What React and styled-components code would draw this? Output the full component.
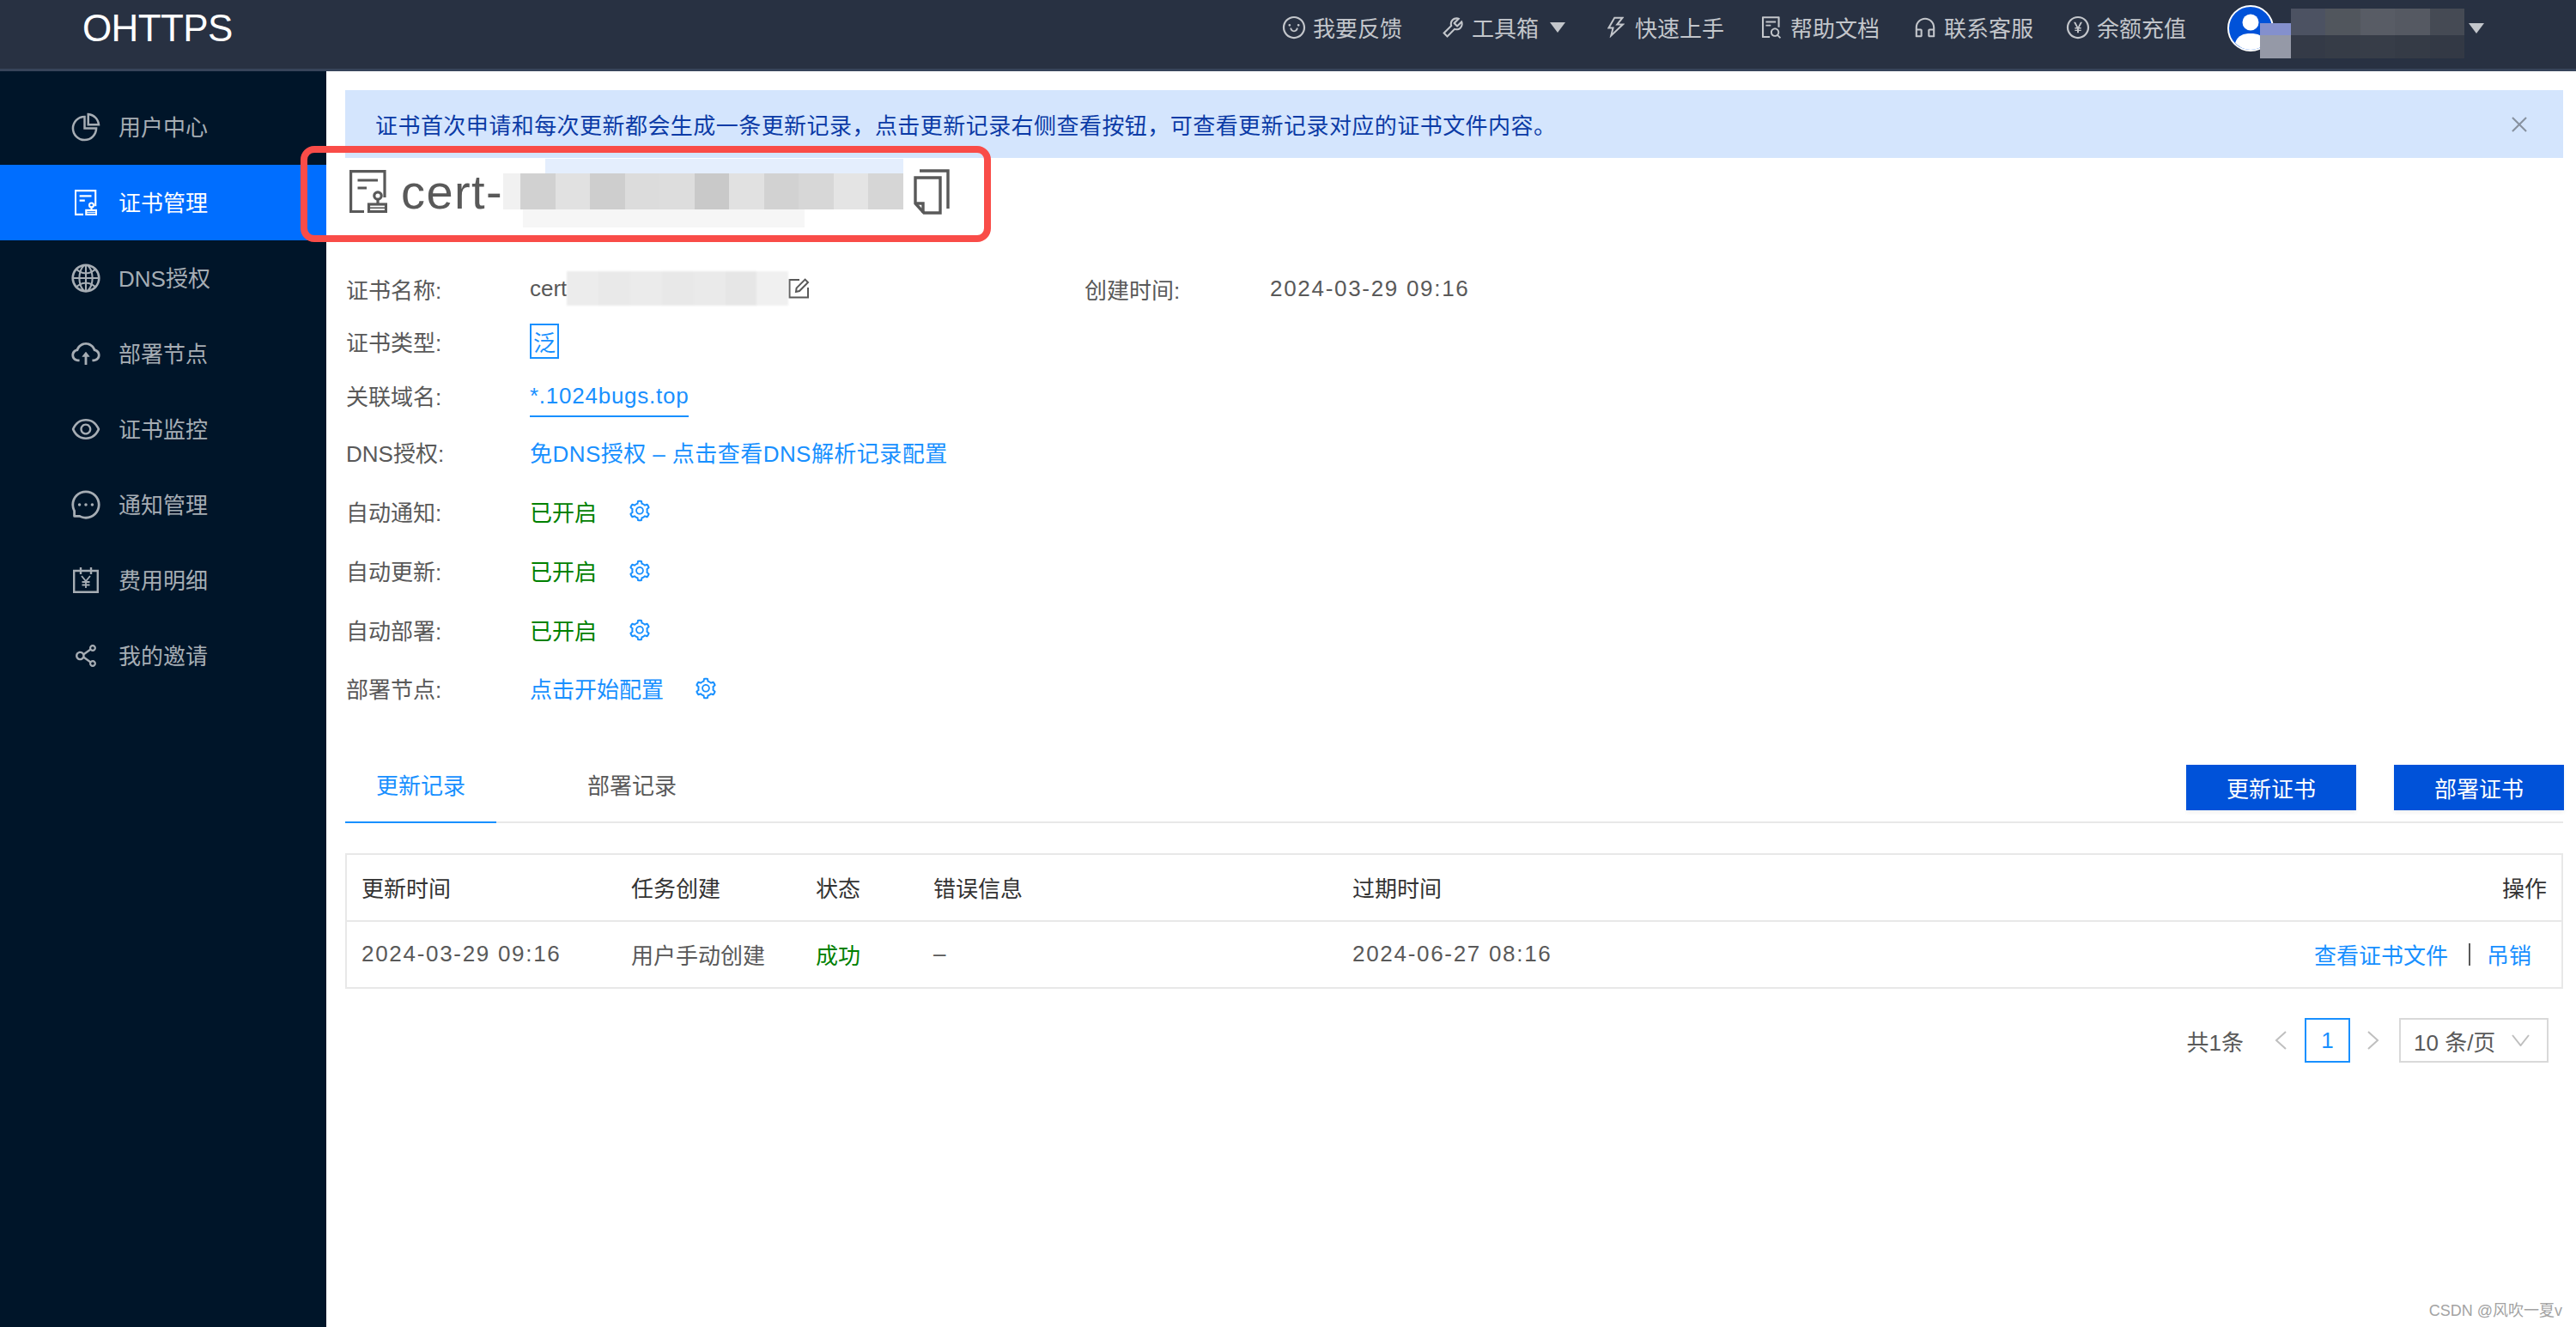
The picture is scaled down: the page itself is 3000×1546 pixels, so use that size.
import React from "react";
import styled, { createGlobalStyle } from "styled-components";
import {
  AiOutlineSmile,
  AiOutlineTool,
  AiOutlineThunderbolt,
  AiOutlineFileSearch,
  AiOutlineCustomerService,
  AiOutlinePayCircle,
  AiOutlinePieChart,
  AiOutlineGlobal,
  AiOutlineCloudUpload,
  AiOutlineEye,
  AiOutlineMessage,
  AiOutlineShareAlt,
  AiOutlineSetting,
  AiOutlineClose,
} from "react-icons/ai";

const GlobalStyle = createGlobalStyle`
  html, body {
    margin: 0;
    padding: 0;
    background: #fff;
  }
  body {
    font-family: "Liberation Sans", "Noto Sans CJK SC", sans-serif;
    font-size: 26px;
    color: #595959;
  }
`;

const Page = styled.div`
  position: relative;
  width: 3000px;
  height: 1546px;
  overflow: hidden;
  display: flex;
  flex-direction: column;
`;

const Header = styled.header`
  flex: none;
  height: 66px;
  padding: 0 107px 14px 96px;
  background: #283142;
  border-bottom: 3px solid #37445a;
  display: flex;
  align-items: center;
  justify-content: space-between;
`;

const Logo = styled.div`
  color: #fff;
  font-size: 44px;
  letter-spacing: -0.6px;
`;

const HeaderRight = styled.div`
  display: flex;
  align-items: center;
`;

const HeaderItem = styled.div`
  display: flex;
  align-items: center;
  margin-left: ${(p) => p.$ml}px;
  padding-bottom: 3px;
  color: #c3c6cb;
`;

const HeaderIcon = styled.span`
  flex: none;
  width: 26px;
  height: 30px;
  margin-right: 9px;
  display: flex;
  align-items: center;
  justify-content: center;
  svg {
    flex: none;
  }
`;

const Caret = styled.span`
  flex: none;
  width: 0;
  height: 0;
  margin-left: ${(p) => p.$ml}px;
  border-left: 9.5px solid transparent;
  border-right: 9.5px solid transparent;
  border-top: 12px solid #c3c6cb;
`;

const User = styled.div`
  position: relative;
  display: flex;
  align-items: center;
  margin-left: 48px;
  width: 299px;
`;

const UserBlur = styled.div`
  position: absolute;
  left: 38px;
  top: 4px;
  width: 238px;
  height: 58px;
  display: grid;
  grid-template-columns: 36px repeat(5, 1fr);
  grid-template-rows: 17px 14px 27px;
  filter: blur(0.7px);
`;

const Tile = styled.span`
  background: ${(p) => p.$c};
`;

const UserCaret = styled(Caret)`
  position: absolute;
  right: 0;
  top: 21px;
`;

const Body = styled.div`
  flex: 1;
  display: flex;
  min-height: 0;
`;

const Sidebar = styled.nav`
  flex: none;
  width: 380px;
  padding-top: 21px;
  background: #001529;
`;

const NavItem = styled.div`
  height: 88px;
  padding-left: 83px;
  display: flex;
  align-items: center;
  background: ${(p) => (p.$active ? "#006eff" : "transparent")};
  color: ${(p) => (p.$active ? "#fff" : "#a6adb4")};
`;

const NavLabel = styled.span`
  margin-bottom: 4px;
`;

const NavIcon = styled.span`
  flex: none;
  width: 33px;
  height: 33px;
  margin-right: 22px;
  display: flex;
  align-items: center;
  justify-content: center;
  svg {
    flex: none;
  }
`;

const Main = styled.main`
  flex: 1;
  min-width: 0;
  padding: 22px 15px 0 22px;
`;

const Alert = styled.div`
  height: 79px;
  padding: 0 38px 0 35px;
  background: #d4e5fd;
  color: #0b3ba6;
  letter-spacing: 0.45px;
  display: flex;
  align-items: center;
  justify-content: space-between;
`;

const AlertClose = styled.span`
  display: flex;
  color: #87919f;
`;

const TitleRow = styled.div`
  height: 78px;
  margin-bottom: 38px;
  padding: 0 0 6px 5px;
  display: flex;
  align-items: center;
`;

const TitleText = styled.span`
  margin-left: 16px;
  font-size: 56px;
  letter-spacing: 1.4px;
  color: #595959;
`;

const TitleBlur = styled.span`
  position: relative;
  flex: none;
  width: 466px;
  height: 42px;
  margin-right: 12px;
  display: flex;
`;

const TitleTiles = styled.span`
  flex: none;
  width: 446px;
  margin-left: 20px;
  display: grid;
  grid-template-columns: repeat(11, 1fr);
  filter: blur(0.6px);
`;

const BlurLead = styled.span`
  position: absolute;
  left: 0;
  top: 0;
  bottom: 0;
  width: 20px;
  background: #f1f1f1;
`;

const BlurAbove = styled.span`
  position: absolute;
  left: 49px;
  right: 0;
  top: -17px;
  height: 17px;
  background: #e4eefd;
`;

const BlurBelow = styled.span`
  position: absolute;
  left: 23px;
  width: 328px;
  top: 42px;
  height: 21px;
  background: #f6f6f6;
`;

const Details = styled.div`
  padding-left: 1px;
  display: grid;
  grid-template-columns: 214px 646px 216px 1fr;
  grid-template-rows: 60px 62px 64px 68px 70px 69px 69px 67px;
  align-items: center;
`;

const Label = styled.span``;

const Value = styled.span`
  grid-column: ${(p) => (p.$narrow ? "auto" : "2 / span 3")};
  display: flex;
  align-items: center;
  color: ${(p) => p.$color || "#595959"};
`;

const NameBlur = styled.span`
  flex: none;
  width: 258px;
  height: 40px;
  display: grid;
  grid-template-columns: repeat(7, 1fr);
  filter: blur(0.8px);
`;

const TypeTag = styled.span`
  width: 30px;
  height: 37px;
  border: 2px solid #1890ff;
  color: #1890ff;
  display: flex;
  align-items: center;
  justify-content: center;
`;

const LinkText = styled.a`
  color: #1890ff;
  letter-spacing: ${(p) => p.$spacing || 0}px;
`;

const DomainLink = styled(LinkText)`
  margin-top: 11px;
  padding-bottom: 7px;
  border-bottom: 2px solid #1890ff;
`;

const StateText = styled.span`
  color: #008000;
`;

const GearSlot = styled.span`
  margin-left: ${(p) => p.$ml}px;
  display: flex;
  color: #1890ff;
`;

const DateText = styled.span`
  letter-spacing: 1.7px;
`;

const TabBar = styled.div`
  height: 87px;
  margin-top: 35px;
  border-bottom: 2px solid #e8e8e8;
  display: flex;
  align-items: flex-end;
  justify-content: space-between;
`;

const Tabs = styled.div`
  display: flex;
  gap: 70px;
`;

const Tab = styled.div`
  width: 176px;
  height: 87px;
  margin-bottom: -2px;
  box-sizing: border-box;
  padding-bottom: 2px;
  display: flex;
  align-items: center;
  justify-content: center;
  color: ${(p) => (p.$active ? "#1890ff" : "#595959")};
  border-bottom: 2px solid ${(p) => (p.$active ? "#1890ff" : "transparent")};
`;

const TabActions = styled.div`
  display: flex;
  gap: 44px;
  margin-right: -1px;
  padding-bottom: 13px;
`;

const PrimaryButton = styled.button`
  width: 198px;
  height: 53px;
  padding: 0;
  border: none;
  background: #0052d9;
  color: #fff;
  font: inherit;
  box-shadow: 0 3px 4px rgba(0, 0, 0, 0.05);
`;

const Table = styled.div`
  margin-top: 35px;
  border: 2px solid #e8e8e8;
`;

const Row = styled.div`
  height: 75px;
  padding: 0 17px 1px;
  display: grid;
  grid-template-columns: 314px 215px 137px 488px 1fr auto;
  align-items: center;
  color: ${(p) => (p.$head ? "#333" : "#595959")};
  & + & {
    border-top: 2px solid #e8e8e8;
  }
`;

const RowActions = styled.span`
  margin-right: 18px;
  display: flex;
  align-items: center;
`;

const ActionDivider = styled.span`
  width: 2px;
  height: 26px;
  margin: 0 19px 0 24px;
  background: #595959;
`;

const Pagination = styled.div`
  margin-top: 34px;
  padding-right: 17px;
  display: flex;
  align-items: center;
  justify-content: flex-end;
`;

const PageArrow = styled.svg`
  flex: none;
  width: 15px;
  height: 22px;
  margin: ${(p) => p.$m};
  fill: none;
  stroke: #bfbfbf;
  stroke-width: 2;
`;

const PageNumber = styled.span`
  width: 49px;
  height: 48px;
  border: 2px solid #1890ff;
  color: #1890ff;
  display: flex;
  align-items: center;
  justify-content: center;
`;

const PageSize = styled.div`
  width: 135px;
  height: 48px;
  padding: 0 20px 0 15px;
  border: 2px solid #d9d9d9;
  display: flex;
  align-items: center;
  justify-content: space-between;
`;

const Chevron = styled.svg`
  width: 21px;
  height: 14px;
  fill: none;
  stroke: #bfbfbf;
  stroke-width: 2;
`;

const RedBox = styled.div`
  position: absolute;
  left: 350px;
  top: 170px;
  width: 804px;
  height: 112px;
  box-sizing: border-box;
  border: 8px solid #f94c48;
  border-radius: 16px;
`;

const Watermark = styled.div`
  position: absolute;
  right: 16px;
  top: 1512px;
  font-size: 18px;
  color: #a3a3a3;
`;

const CertIcon = ({ width, height, color, stroke }) => (
  <svg width={width} height={height} viewBox="0 0 44 50" fill="none" stroke={color} strokeWidth={stroke}>
    <path d="M17 48.5H1.6V1.6H41V32" />
    <path d="M9.5 12H33M9.5 21H20" />
    <circle cx="33" cy="30" r="4.2" />
    <path d="M33 34.5V40" />
    <rect x="22.5" y="40" width="20" height="8.5" />
    <path d="M22.5 44.2H42.5" strokeWidth={stroke * 0.5} />
  </svg>
);

const CopyIcon = () => (
  <svg width="42" height="53" viewBox="0 0 42 53" fill="none" stroke="#595959" strokeWidth="3.4">
    <path d="M7 2H40V46" />
    <path d="M2 10H31V51H12L2 40V10Z" />
    <path d="M2 40H11V51" />
  </svg>
);

const EditIcon = () => (
  <svg width="25" height="24" viewBox="0 0 25 24" fill="none" stroke="#595959" strokeWidth="2">
    <path d="M13 2H1.5V22.5H23V11" />
    <path d="M9 16L9.6 11.6L19.6 1.6L23 5L13 15Z" />
  </svg>
);

const BillIcon = () => (
  <svg width="30" height="30" viewBox="0 0 30 30" fill="none" stroke="#a6adb4" strokeWidth="2.4">
    <path d="M1.2 4H28.8V28.8H1.2V4Z" />
    <path d="M9 0V8M21 0V8" />
    <path d="M10 10L15 16L20 10M15 16V24M10.5 17H19.5M10.5 20.5H19.5" strokeWidth="1.8" />
  </svg>
);

const Avatar = () => (
  <svg width="54" height="54" viewBox="0 0 54 54">
    <circle cx="27" cy="27" r="26" fill="#0052d9" stroke="#fff" strokeWidth="2" />
    <circle cx="27" cy="20" r="9.5" fill="#fff" />
    <path d="M9 44C12 35 19 33 27 33C35 33 42 35 45 44C40 49 34 52 27 52C20 52 14 49 9 44Z" fill="#fff" />
  </svg>
);

const alertText =
  "证书首次申请和每次更新都会生成一条更新记录\uFF0C点击更新记录右侧查看按钮\uFF0C可查看更新记录对应的证书文件内容\u3002";

const headerItems = [
  { text: "我要反馈", icon: <AiOutlineSmile size={30} />, ml: 0 },
  { text: "工具箱", icon: <AiOutlineTool size={30} />, ml: 46, caret: true },
  { text: "快速上手", icon: <AiOutlineThunderbolt size={30} />, ml: 46 },
  { text: "帮助文档", icon: <AiOutlineFileSearch size={30} />, ml: 42 },
  { text: "联系客服", icon: <AiOutlineCustomerService size={30} />, ml: 40 },
  { text: "余额充值", icon: <AiOutlinePayCircle size={30} />, ml: 39 },
];

const navItems = [
  { text: "用户中心", icon: <AiOutlinePieChart size={38} /> },
  { text: "证书管理", active: true, icon: <CertIcon width={26} height={30} color="#fff" stroke={3.6} /> },
  { text: "DNS授权", icon: <AiOutlineGlobal size={38} /> },
  { text: "部署节点", icon: <AiOutlineCloudUpload size={38} /> },
  { text: "证书监控", icon: <AiOutlineEye size={38} /> },
  { text: "通知管理", icon: <AiOutlineMessage size={38} /> },
  { text: "费用明细", icon: <BillIcon /> },
  { text: "我的邀请", icon: <AiOutlineShareAlt size={34} /> },
];

const userTiles = [
  "transparent", "#4c5262", "#51565d", "#585c65", "#555962", "#454a54",
  "#8490cd", "#4c5262", "#51565d", "#585c65", "#555962", "#454a54",
  "#9599a7", "#343a47", "#363c47", "#373d48", "#353b46", "#333945",
];

const titleTiles = ["#d1d1d1", "#e1e1e1", "#cecece", "#dcdcdc", "#dddddd", "#c9c9c9", "#e1e1e1", "#d2d2d2", "#d7d7d7", "#e4e4e4", "#d6d6d6"];

const nameTiles = ["#ececec", "#e9e9e9", "#ebebeb", "#e8e8e8", "#eaeaea", "#e6e6e6", "#f0f0f0"];

const Gear = ({ ml }) => (
  <GearSlot $ml={ml}>
    <AiOutlineSetting size={28} />
  </GearSlot>
);

export default function App() {
  return (
    <>
      <GlobalStyle />
      <Page>
        <Header>
          <Logo>OHTTPS</Logo>
          <HeaderRight>
            {headerItems.map((item) => (
              <HeaderItem key={item.text} $ml={item.ml}>
                <HeaderIcon>{item.icon}</HeaderIcon>
                {item.text}
                {item.caret && <Caret $ml={13} />}
              </HeaderItem>
            ))}
            <User>
              <Avatar />
              <UserBlur>
                {userTiles.map((c, i) => (
                  <Tile key={i} $c={c} />
                ))}
              </UserBlur>
              <UserCaret $ml={0} />
            </User>
          </HeaderRight>
        </Header>
        <Body>
          <Sidebar>
            {navItems.map((item) => (
              <NavItem key={item.text} $active={item.active}>
                <NavIcon>{item.icon}</NavIcon>
                <NavLabel>{item.text}</NavLabel>
              </NavItem>
            ))}
          </Sidebar>
          <Main>
            <Alert>
              {alertText}
              <AlertClose>
                <AiOutlineClose size={26} />
              </AlertClose>
            </Alert>
            <TitleRow>
              <CertIcon width={44} height={50} color="#595959" stroke={3.2} />
              <TitleText>cert-</TitleText>
              <TitleBlur>
                <BlurAbove />
                <BlurLead />
                <TitleTiles>
                  {titleTiles.map((c, i) => (
                    <Tile key={i} $c={c} />
                  ))}
                </TitleTiles>
                <BlurBelow />
              </TitleBlur>
              <CopyIcon />
            </TitleRow>
            <Details>
              <Label>证书名称:</Label>
              <Value $narrow>
                cert
                <NameBlur>
                  {nameTiles.map((c, i) => (
                    <Tile key={i} $c={c} />
                  ))}
                </NameBlur>
                <EditIcon />
              </Value>
              <Label>创建时间:</Label>
              <Value $narrow>
                <DateText>2024-03-29 09:16</DateText>
              </Value>
              <Label>证书类型:</Label>
              <Value>
                <TypeTag>泛</TypeTag>
              </Value>
              <Label>关联域名:</Label>
              <Value>
                <DomainLink $spacing={0.75}>*.1024bugs.top</DomainLink>
              </Value>
              <Label>DNS授权:</Label>
              <Value>
                <LinkText $spacing={0.45}>免DNS授权 – 点击查看DNS解析记录配置</LinkText>
              </Value>
              <Label>自动通知:</Label>
              <Value>
                <StateText>已开启</StateText>
                <Gear ml={36} />
              </Value>
              <Label>自动更新:</Label>
              <Value>
                <StateText>已开启</StateText>
                <Gear ml={36} />
              </Value>
              <Label>自动部署:</Label>
              <Value>
                <StateText>已开启</StateText>
                <Gear ml={36} />
              </Value>
              <Label>部署节点:</Label>
              <Value>
                <LinkText>点击开始配置</LinkText>
                <Gear ml={35} />
              </Value>
            </Details>
            <TabBar>
              <Tabs>
                <Tab $active>更新记录</Tab>
                <Tab>部署记录</Tab>
              </Tabs>
              <TabActions>
                <PrimaryButton>更新证书</PrimaryButton>
                <PrimaryButton>部署证书</PrimaryButton>
              </TabActions>
            </TabBar>
            <Table>
              <Row $head>
                <span>更新时间</span>
                <span>任务创建</span>
                <span>状态</span>
                <span>错误信息</span>
                <span>过期时间</span>
                <span>操作</span>
              </Row>
              <Row>
                <DateText>2024-03-29 09:16</DateText>
                <span>用户手动创建</span>
                <StateText>成功</StateText>
                <span>–</span>
                <DateText>2024-06-27 08:16</DateText>
                <RowActions>
                  <LinkText>查看证书文件</LinkText>
                  <ActionDivider />
                  <LinkText>吊销</LinkText>
                </RowActions>
              </Row>
            </Table>
            <Pagination>
              共1条
              <PageArrow $m="0 20px 0 36px" viewBox="0 0 15 22">
                <path d="M13 1L2 11L13 21" />
              </PageArrow>
              <PageNumber>1</PageNumber>
              <PageArrow $m="0 23px 0 19px" viewBox="0 0 15 22">
                <path d="M2 1L13 11L2 21" />
              </PageArrow>
              <PageSize>
                10 条/页
                <Chevron viewBox="0 0 21 14">
                  <path d="M1 1L10.5 13L20 1" />
                </Chevron>
              </PageSize>
            </Pagination>
          </Main>
        </Body>
        <RedBox />
        <Watermark>CSDN @风吹一夏v</Watermark>
      </Page>
    </>
  );
}
